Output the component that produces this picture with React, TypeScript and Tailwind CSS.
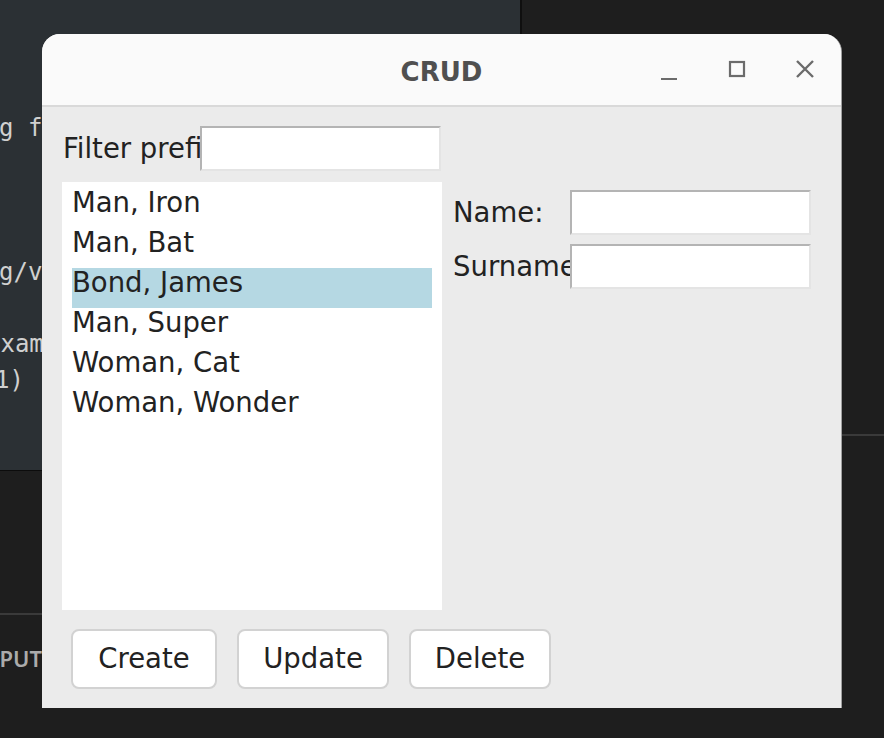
import React from "react";

const codeLines: { text: string; cls: string }[] = [
  { text: "g from pathlib import Path", cls: "ml-[-1px]" },
  { text: " ", cls: "" },
  { text: " ", cls: "" },
  { text: " ", cls: "" },
  { text: "g/vendor/lib", cls: "ml-[-1px]" },
  { text: " ", cls: "" },
  { text: "example", cls: "ml-[-14px]" },
  { text: "1)", cls: "ml-[-5px]" },
];

const people = ["Man, Iron", "Man, Bat", "Bond, James", "Man, Super", "Woman, Cat", "Woman, Wonder"];

function Field() {
  return (
    <div className="w-[241px] h-[45px] bg-white border-2 border-t-[#b4b4b4] border-l-[#b4b4b4] border-r-[#e4e4e4] border-b-[#e4e4e4]" />
  );
}

function Btn({ label, w }: { label: string; w: string }) {
  return (
    <div
      className={`${w} h-[60px] bg-white border-2 border-[#d2d2d2] rounded-[8px] flex items-center justify-center text-[27.5px] text-[#222]`}
    >
      {label}
    </div>
  );
}

export default function App() {
  return (
    <div className="relative w-[884px] h-[738px] overflow-hidden bg-[#1e1e1e] flex">
      {/* left column: editor + bottom panel */}
      <div className="w-[520px] h-full flex flex-col">
        <div className="h-[471px] bg-[#2b3034] border-b border-[#0c0c0c] pt-[110px] overflow-hidden">
          {codeLines.map((l, i) => (
            <div
              key={i}
              className={`${l.cls} whitespace-pre text-[24px] leading-[36px] text-[#d0d0d0]`}
              style={{ fontFamily: '"DejaVu Sans Mono", monospace' }}
            >
              {l.text}
            </div>
          ))}
        </div>
        <div className="flex-1 bg-[#1e1e1e] flex flex-col">
          <div className="h-[142px]" />
          <div className="h-[2px] bg-[#3a3a3a]" />
          <div className="w-[42px] flex justify-end mt-[30px]">
            <span
              className="whitespace-nowrap text-[22px] font-semibold leading-[26px] text-[#ababab]"
              style={{ fontFamily: '"Noto Sans", sans-serif' }}
            >
              OUTPUT
            </span>
          </div>
        </div>
      </div>
      <div className="w-[2px] h-[471px] bg-[#0f0f0f]" />
      <div className="flex-1 h-full bg-[#1e1e1e] flex flex-col">
        <div className="h-[434px]" />
        <div className="h-[2px] bg-[#3a3a3a]" />
      </div>

      {/* window */}
      <div
        className="absolute left-[42px] top-[34px] w-[800px] h-[674px] flex flex-col rounded-t-[18px] overflow-hidden bg-[#ebebeb] border-r border-[#a0a0a0]"
        style={{ fontFamily: '"DejaVu Sans", sans-serif' }}
      >
        <div className="h-[73px] shrink-0 bg-[#fafafa] border-b-2 border-[#d9d9d9] grid grid-cols-[1fr_auto_1fr] items-center">
          <div />
          <div className="text-[26px] font-bold text-[#505050] pt-[4px] leading-[30px]">CRUD</div>
          <div className="flex justify-end items-center pr-[24px] gap-[44px] pt-[1px]">
            <svg width="24" height="24" viewBox="0 0 24 24" className="text-[#6b6b6b]">
              <path d="M4 21H20" stroke="currentColor" strokeWidth="2.2" />
            </svg>
            <svg width="24" height="24" viewBox="0 0 24 24" className="text-[#6b6b6b]">
              <rect x="5" y="4" width="14" height="14" fill="none" stroke="currentColor" strokeWidth="2.2" />
            </svg>
            <svg width="24" height="24" viewBox="0 0 24 24" className="text-[#6b6b6b]">
              <path d="M4 3L20 19M20 3L4 19" stroke="currentColor" strokeWidth="2.4" />
            </svg>
          </div>
        </div>

        <div className="flex-1 flex flex-col pl-[20px] pt-[19px] text-[27.5px] text-[#222]">
          <div className="flex items-center h-[45px]">
            <div className="w-[138px] pl-[1px] overflow-hidden whitespace-nowrap">Filter prefix:</div>
            <Field />
          </div>
          <div className="flex mt-[11px]">
            <div className="w-[380px] h-[428px] bg-white pt-[6px] px-[10px]">
              {people.map((p) => (
                <div
                  key={p}
                  className={`h-[40px] leading-[29px] whitespace-nowrap ${p === "Bond, James" ? "bg-[#b5d8e3]" : ""}`}
                >
                  {p}
                </div>
              ))}
            </div>
            <div className="ml-[11px] mt-[8px] flex flex-col gap-[9px]">
              <div className="flex items-center">
                <div className="w-[117px] overflow-hidden whitespace-nowrap">Name:</div>
                <Field />
              </div>
              <div className="flex items-center">
                <div className="w-[117px] overflow-hidden whitespace-nowrap">Surname:</div>
                <Field />
              </div>
            </div>
          </div>
          <div className="flex gap-[20px] mt-[19px] pl-[9px]">
            <Btn label="Create" w="w-[146px]" />
            <Btn label="Update" w="w-[152px]" />
            <Btn label="Delete" w="w-[142px]" />
          </div>
        </div>
      </div>
    </div>
  );
}
